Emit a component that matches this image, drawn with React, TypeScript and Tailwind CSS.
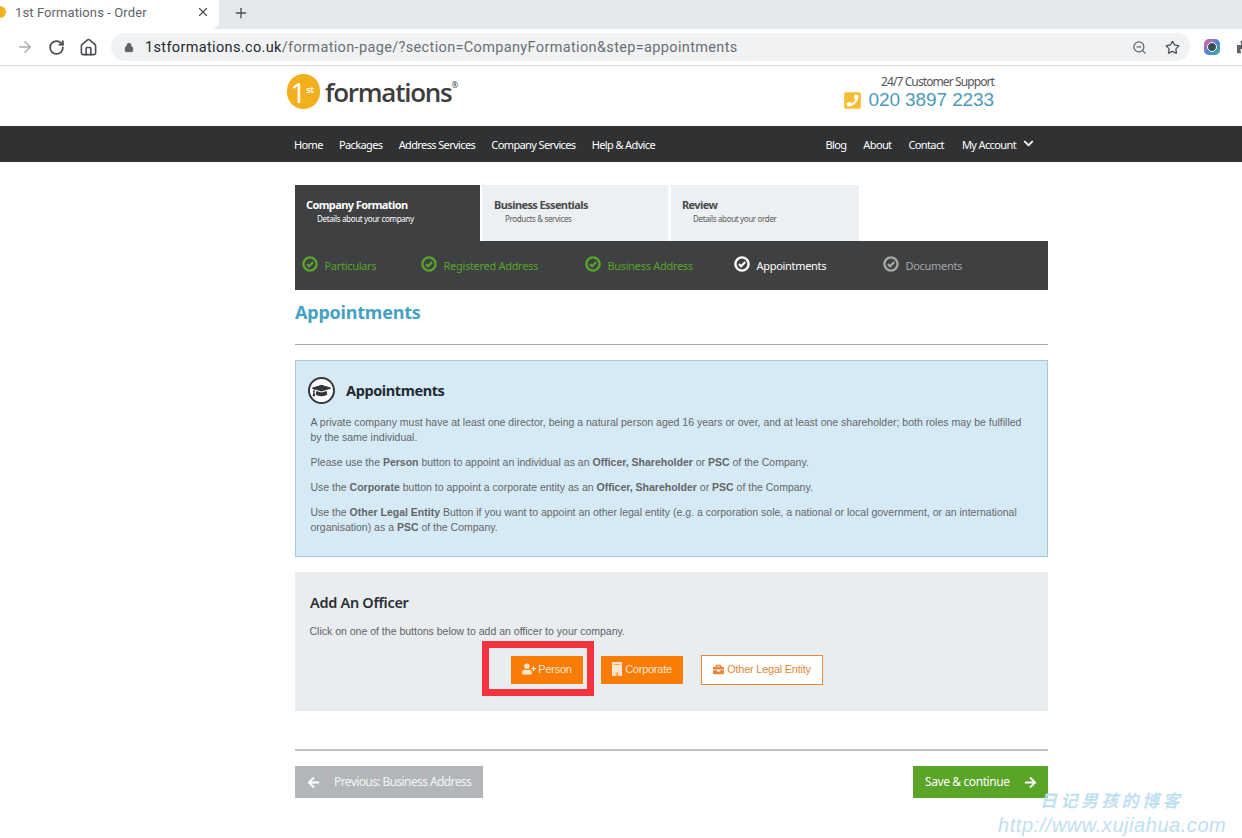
import { ArrowRight, RotateCw, Home, Lock, ZoomOut, Star, X, Plus } from "lucide-react";
import {
  FaUserPlus, FaBriefcase, FaArrowLeft, FaArrowRight, FaChevronDown,
  FaGraduationCap, FaPhoneSquare, FaPuzzlePiece,
} from "react-icons/fa";

const site = "font-['Noto_Sans','Open_Sans',sans-serif]";
const arial = "font-['Liberation_Sans',Arial,sans-serif]";

function CheckRing({ className }: { className: string }) {
  return (
    <svg viewBox="0 0 16 16" className={className} fill="none" stroke="currentColor">
      <circle cx="8" cy="8" r="6.6" strokeWidth="2.4" />
      <path d="M4.9 8.1 L7.2 10.3 L11.2 6" strokeWidth="2.2" />
    </svg>
  );
}

function CorporateIcon() {
  return (
    <svg viewBox="0 0 10 14" className="w-[10px] h-[14px] shrink-0">
      <rect x="0" y="0" width="10" height="14" fill="#fde6cf" />
      <rect x="1.5" y="2" width="7" height="1" fill="#f9a860" />
      <rect x="3.5" y="10.5" width="3" height="3.5" fill="#f9a860" />
    </svg>
  );
}

function Tab({ title, sub, active, w, pl }: { title: string; sub: string; active?: boolean; w: string; pl: string }) {
  return (
    <div className={`${w} ${pl} h-[56px] pt-[12px] ${active ? "bg-[#3f4041] text-white" : "bg-[#edf0f3] text-[#4a4a4a]"}`}>
      <div className="text-[11px] leading-[16px] font-bold tracking-[-0.6px]">{title}</div>
      <div className={`text-[8px] leading-[12px] pl-[11px] tracking-[-0.35px] ${active ? "text-white" : "text-[#5a5a5a]"}`}>{sub}</div>
    </div>
  );
}

function Step({ label, color, w, iconColor }: { label: string; color: string; iconColor: string; w: string }) {
  return (
    <div className={`${w} flex items-center gap-[6.5px]`}>
      <CheckRing className={`w-[16px] h-[16px] -mt-[4px] shrink-0 ${iconColor}`} />
      <span className={`text-[11px] mt-[2px] tracking-[-0.3px] ${color}`}>{label}</span>
    </div>
  );
}

export default function App() {
  return (
    <div className={`relative w-[1242px] h-[838px] overflow-hidden bg-white ${site}`}>
      {/* Tab strip */}
      <div className="h-[29px] bg-[#e6e9ec] flex items-stretch">
        <div className="relative w-[219px] bg-white rounded-br-[8px] flex items-center pl-[15px]">
          <span className="absolute -left-[6px] top-[6px] w-[12px] h-[12px] rounded-full bg-[#f2b01e]" />
          <span className="text-[13px] text-[#5f6368] font-['Roboto',sans-serif] tracking-[0.1px] -mt-[3px]">1st Formations - Order</span>
          <X className="absolute left-[196px] top-[5px] w-[14px] h-[14px] text-[#4a4d51]" />
        </div>
        <div className="flex-1 flex items-center pl-[14px]">
          <Plus className="w-[16px] h-[16px] text-[#4a4d51] -mt-[4px]" strokeWidth={2} />
        </div>
      </div>
      {/* Toolbar */}
      <div className="h-[37px] border-b border-[#d9dadb] flex items-center pl-[16px] bg-white">
        <ArrowRight className="shrink-0 w-[18px] h-[18px] text-[#a9acb0]" strokeWidth={2} />
        <RotateCw className="shrink-0 ml-[14px] w-[17px] h-[17px] text-[#4a4d51]" strokeWidth={2.5} />
        <Home className="shrink-0 ml-[14px] w-[19px] h-[19px] text-[#4a4d51]" strokeWidth={2} />
        <div className="ml-[13px] w-[1079px] h-[28px] rounded-full bg-[#f0f2f4] flex items-center pl-[13px] shrink-0">
          <Lock className="shrink-0 w-[10px] h-[11px] text-[#5f6368] fill-[#5f6368]" />
          <span className="ml-[11px] mt-[1px] text-[14.5px] tracking-[0.35px] font-['Roboto',sans-serif] text-[#6b6f74]">
            <span className="text-[#26292c]">1stformations.co.uk</span>/formation-page/?section=CompanyFormation&amp;step=appointments
          </span>
          <ZoomOut className="ml-auto w-[15px] h-[15px] text-[#5f6368]" />
          <Star className="ml-[18px] mr-[10px] w-[15px] h-[15px] text-[#4a4d51]" strokeWidth={2} />
        </div>
        <span className="ml-[14px] shrink-0 w-[16px] h-[16px] rounded-[5px] bg-gradient-to-br from-[#ec4899] via-[#4f7fd9] to-[#35b779] flex items-center justify-center">
          <span className="w-[8px] h-[8px] rounded-full bg-[#3d4a55] border border-white box-content" />
        </span>
        <FaPuzzlePiece className="ml-[17px] shrink-0 w-[14px] h-[14px] text-[#5f6368]" />
      </div>

      {/* Site header */}
      <div className="w-[753px] ml-[295px] h-[60px] flex items-start justify-between">
        <div className="flex items-center -ml-[8px] mt-[8px]">
          <div className="w-[33px] h-[35px] rounded-full bg-[#f2b01e] text-white flex items-center justify-center">
            <span className="text-[28px] leading-none font-normal font-['Open_Sans',sans-serif] -ml-[3px]">1</span>
            <span className="text-[9px] leading-none font-semibold -mt-[4px] tracking-[-0.3px]">st</span>
          </div>
          <span className="ml-[5px] text-[26px] leading-[34px] font-semibold text-[#3d3d3d] tracking-[-1.25px] font-['Open_Sans',sans-serif]">formations</span>
          <span className="text-[8px] text-[#3d3d3d] -mt-[14px]">®</span>
        </div>
        <div className="mr-[54px] mt-[8px] flex flex-col items-end">
          <div className="text-[12px] leading-[15px] text-[#555] tracking-[-0.9px]">24/7 Customer Support</div>
          <div className="flex items-center gap-[7px] -mt-[1px]">
            <FaPhoneSquare className="w-[19px] h-[19px] text-[#f7bd32]" />
            <span className={`${arial} text-[19px] leading-[24px] text-[#4d9ab8] tracking-[-0.1px]`}>020 3897 2233</span>
          </div>
        </div>
      </div>

      {/* Nav */}
      <div className="h-[36px] bg-[#303133]">
        <div className="w-[753px] ml-[295px] h-full flex items-center justify-between text-white text-[11px] tracking-[-0.62px]">
          <div className="flex gap-[16.2px] -ml-[1px] mt-[2px]">
            <span>Home</span><span>Packages</span><span>Address Services</span><span>Company Services</span><span>Help &amp; Advice</span>
          </div>
          <div className="flex gap-[17px] mr-[14px] items-center mt-[2px]">
            <span>Blog</span><span>About</span><span>Contact</span>
            <span className="flex items-center gap-[7px] ml-[1px]">My Account <FaChevronDown className="w-[11px] h-[11px] -mt-[3px]" /></span>
          </div>
        </div>
      </div>

      {/* Main */}
      <div className="w-[753px] ml-[295px] pt-[23px]">
        <div className="flex gap-[2px]">
          <Tab active w="w-[185px]" pl="pl-[11px]" title="Company Formation" sub="Details about your company" />
          <Tab w="w-[186px]" pl="pl-[12px]" title="Business Essentials" sub="Products & services" />
          <div className="ml-[1px]">
            <Tab w="w-[188px]" pl="pl-[11px]" title="Review" sub="Details about your order" />
          </div>
        </div>
        <div className="h-[49px] bg-[#3f4041] flex items-center pl-[7px]">
          <Step w="w-[119px]" label="Particulars" color="text-[#58a42c]" iconColor="text-[#58a42c]" />
          <Step w="w-[164px]" label="Registered Address" color="text-[#58a42c]" iconColor="text-[#58a42c]" />
          <Step w="w-[149px]" label="Business Address" color="text-[#58a42c]" iconColor="text-[#58a42c]" />
          <Step w="w-[149px]" label="Appointments" color="text-white" iconColor="text-white" />
          <Step w="w-[100px]" label="Documents" color="text-[#a5a7a8]" iconColor="text-[#a5a7a8]" />
        </div>

        <h1 className="mt-[8px] text-[18px] leading-[28px] font-bold text-[#45a2c5] tracking-[-0.22px]">Appointments</h1>
        <div className="mt-[18px] h-[1px] bg-[#aaaaaa]" />

        <div className="mt-[15px] h-[197px] bg-[#d6eaf5] border border-[#a9c9d6] pl-[14.5px] pr-[15px]">
          <div className="flex items-center h-[59px] -ml-[2.5px]">
            <span className="w-[27px] h-[27px] rounded-full border-2 border-[#33363a] bg-white flex items-center justify-center">
              <FaGraduationCap className="w-[19px] h-[19px] text-[#33363a]" />
            </span>
            <span className="ml-[11px] text-[14.5px] font-bold text-[#1f2a33] tracking-[-0.4px]">Appointments</span>
          </div>
          <div className={`${arial} text-[10.5px] leading-[15px] text-[#636668] mt-[-5px] flex flex-col gap-[10px]`}>
            <p>A private company must have at least one director, being a natural person aged 16 years or over, and at least one shareholder; both roles may be fulfilled by the same individual.</p>
            <p>Please use the <b>Person</b> button to appoint an individual as an <b>Officer, Shareholder</b> or <b>PSC</b> of the Company.</p>
            <p>Use the <b>Corporate</b> button to appoint a corporate entity as an <b>Officer, Shareholder</b> or <b>PSC</b> of the Company.</p>
            <p>Use the <b>Other Legal Entity</b> Button if you want to appoint an other legal entity (e.g. a corporation sole, a national or local government, or an international organisation) as a <b>PSC</b> of the Company.</p>
          </div>
        </div>

        <div className="mt-[15px] h-[139px] bg-[#e9edf0] px-[15px] pt-[19px]">
          <div className="text-[14.5px] leading-[22px] font-semibold text-[#2b2f33] tracking-[-0.3px]">Add An Officer</div>
          <div className={`${arial} mt-[11px] text-[10.5px] leading-[14px] text-[#5f6265] -ml-[0.5px]`}>Click on one of the buttons below to add an officer to your company.</div>
          <div className={`${arial} mt-[17px] flex items-center text-[11px] leading-[14px] tracking-[-0.25px] pl-[201px]`}>
            <div className="w-[72px] h-[28px] pb-[2px] bg-[#f97c07] text-[#fde6cf] flex items-center justify-center gap-[2px]">
              <FaUserPlus className="w-[14px] h-[12px] shrink-0" /> Person
            </div>
            <div className="ml-[18px] w-[82px] h-[28px] pb-[2px] bg-[#f97c07] text-[#fde6cf] flex items-center justify-center gap-[3px]">
              <CorporateIcon /> Corporate
            </div>
            <div className="ml-[18px] w-[122px] h-[30px] pb-[2px] bg-white border border-[#e8873a] text-[#e8873a] flex items-center justify-center gap-[3px]">
              <FaBriefcase className="w-[11px] h-[11px] shrink-0" /> Other Legal Entity
            </div>
          </div>
        </div>

        <div className="mt-[38px] h-[2px] bg-[#c4c4c4]" />
        <div className="mt-[15px] flex justify-between text-white text-[12px] tracking-[-0.4px]">
          <div className="w-[188px] h-[32px] bg-[#b3b6b8] flex items-center pl-[12px]">
            <FaArrowLeft className="w-[13px] h-[13px]" />
            <span className="ml-[14px] text-[#f4f5f5] tracking-[-0.6px]">Previous: Business Address</span>
          </div>
          <div className="w-[135px] h-[32px] bg-[#5aa427] flex items-center pl-[12px]">
            <span>Save &amp; continue</span>
            <FaArrowRight className="ml-[14px] w-[13px] h-[13px]" />
          </div>
        </div>
      </div>

      {/* Annotation: red highlight */}
      <div className="absolute left-[482px] top-[641px] w-[112px] h-[55px] border-[7px] border-[#f5333f]" />

      {/* Watermark */}
      <div className="absolute left-[1040px] top-[788px] text-[17px] leading-[24px] italic font-bold tracking-[3.4px] text-[#bfe0f2] font-['Noto_Sans_CJK_SC',sans-serif]">日记男孩的博客</div>
      <div className={`absolute left-[998px] top-[812px] text-[20px] leading-[26px] italic text-[#bfe0f2] tracking-[0.55px] ${arial}`}>http://www.xujiahua.com</div>
    </div>
  );
}
